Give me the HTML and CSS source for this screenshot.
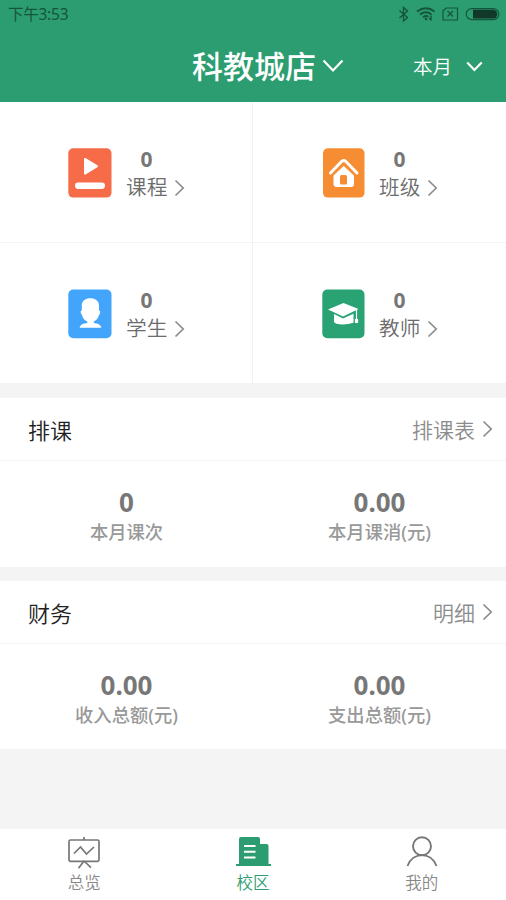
FILE: index.html
```html
<!DOCTYPE html>
<html lang="zh-CN">
<head>
<meta charset="utf-8">
<title>科教城店</title>
<link rel="stylesheet" href="styles.css">
</head>
<body>
<header class="header">
  <div class="status">
    <span class="time">下午3:53</span>
    <svg class="status-icons" width="104" height="22" viewBox="0 0 104 22" fill="none" stroke="#15553b" stroke-width="1.4">
      <path d="M1.500 10.500l8 7-4 3.500V7.500l4 3.500-8 7"/>
      <g stroke-width="1.900"><path d="M19 11.500q9-6.500 17.500 0M22 14.600q6-4.500 11.500 0M25 17.300q3-2.200 5.500-.5"/></g>
      <circle cx="28" cy="19" r="1.300" fill="#15553b" stroke="none"/>
      <path d="M33 15.500v5M31.300 18l1.700 2.300"/>
      <path d="M48 8h11.500v12H45V11zM49.500 11l5.500 5.500M55 11l-5.500 5.500" stroke-width="1.200"/>
      <rect x="68.200" y="8.600" width="32.600" height="11" rx="5.500" stroke-width="1.200"/>
      <path d="M75 9.800h20a4.300 4.300 0 0 1 0 8.600H75z" fill="#12382a" stroke="none"/>
    </svg>
  </div>
  <div class="title-row">
    <h1 class="title">科教城店</h1>
    <svg class="title-arrow" width="22" height="14" viewBox="0 0 22 14"><path d="M1.500 1.500l9.500 10 9.500-10"/></svg>
    <span class="period">本月</span>
    <svg class="period-arrow" width="17" height="11" viewBox="0 0 17 11"><path d="M1.200 1.500l7.200 7.500 7.300-7.500"/></svg>
  </div>
</header>

<main>
  <section class="grid">
    <a class="cell">
      <svg class="tile" width="44" height="50" viewBox="0 0 44 50"><rect x=".3" y=".3" width="43.200" height="49.300" rx="5" fill="#f66b48"/><path d="M17.500 10L29 17q2 1.200 0 2.600L17.500 26.500q-1.500.5-1.500-1V11q0-1.500 1.500-1z" fill="#fff"/><rect x="7" y="34.600" width="30" height="6.300" rx="3.100" fill="#fff"/></svg>
      <span class="info"><b class="count">0</b><span class="name">课程<svg class="next" width="11" height="18" viewBox="0 0 11 18"><path d="M1.500 1.500L9.200 9l-7.700 7.500"/></svg></span></span>
    </a>
    <a class="cell">
      <svg class="tile" width="44" height="50" viewBox="0 0 44 50"><rect x="2" y=".3" width="41.500" height="49.300" rx="5" fill="#f68d33"/><path d="M9.500 25L20.700 13.300q2-1.700 4 0L36 25" fill="none" stroke="#fff" stroke-width="3" stroke-linecap="round"/><path d="M22.700 18L33 27.500V36q0 3-3 3H15.500q-3 0-3-3v-8.500z" fill="#fff"/><rect x="19" y="27" width="7" height="9.500" rx="1.500" fill="#f68d33"/></svg>
      <span class="info"><b class="count">0</b><span class="name">班级<svg class="next" width="11" height="18" viewBox="0 0 11 18"><path d="M1.500 1.500L9.200 9l-7.700 7.500"/></svg></span></span>
    </a>
    <a class="cell">
      <svg class="tile" width="44" height="50" viewBox="0 0 44 50"><rect x=".3" y=".5" width="43.200" height="48.800" rx="5" fill="#42a5fb"/><path d="M13.800 17c-1-10.500 18-10.500 17.200 0v4.500c1.800 0 1.500 3 0 4.500-.8 3.500-3 5.500-5.200 6.500V34c4 .5 7 1.500 7.500 4.700H11.700c.5-3.200 3.800-4.200 7.600-4.700v-1.500c-2.500-1-4.500-3-5.300-6.500-1.500-1.500-2-4.500-.2-4.500z" fill="#fff"/></svg>
      <span class="info"><b class="count">0</b><span class="name">学生<svg class="next" width="11" height="18" viewBox="0 0 11 18"><path d="M1.500 1.500L9.200 9l-7.700 7.500"/></svg></span></span>
    </a>
    <a class="cell">
      <svg class="tile" width="44" height="50" viewBox="0 0 44 50"><rect x="1.300" y=".5" width="42.200" height="48.800" rx="5" fill="#29a373"/><path d="M7 20.500l15.500-6.600L37.500 20 22 27.500zM13 25l9 4.500 10.500-4.800v9q-9.500 3-17 1-2.500-.8-2.500-2z" fill="#fff"/><path d="M35.500 20.500V32M34.500 30.500h2v3h-2z" fill="#fff" stroke="#fff" stroke-width="1.200"/></svg>
      <span class="info"><b class="count">0</b><span class="name">教师<svg class="next" width="11" height="18" viewBox="0 0 11 18"><path d="M1.500 1.500L9.200 9l-7.700 7.500"/></svg></span></span>
    </a>
  </section>

  <section class="panel">
    <div class="panel-head"><h2>排课</h2><a class="more">排课表<svg class="next" width="11" height="18" viewBox="0 0 11 18"><path d="M1.500 1.500L9.200 9l-7.700 7.500"/></svg></a></div>
    <div class="stats">
      <div class="stat"><b>0</b><span>本月课次</span></div>
      <div class="stat"><b>0.00</b><span>本月课消(元)</span></div>
    </div>
  </section>

  <section class="panel">
    <div class="panel-head"><h2>财务</h2><a class="more">明细<svg class="next" width="11" height="18" viewBox="0 0 11 18"><path d="M1.500 1.500L9.200 9l-7.700 7.500"/></svg></a></div>
    <div class="stats">
      <div class="stat"><b>0.00</b><span>收入总额(元)</span></div>
      <div class="stat"><b>0.00</b><span>支出总额(元)</span></div>
    </div>
  </section>
</main>

<nav class="tabs">
  <a class="tab"><svg width="34" height="34" viewBox="0 0 34 34" fill="none" stroke="#777" stroke-width="1.700"><rect x="2" y="4" width="30" height="21.300" rx="1.500"/><path d="M17 1v3M17 25l-5.500 7.300M17 25l7 6.700M7 17.500l6.500-6.500 6 7L27 11"/></svg>总览</a>
  <a class="tab active"><svg width="36" height="34" viewBox="0 0 36 34"><path d="M4 28V3q0-2 2-2h17q2 0 2 2v5h6.500q2 0 2 2v18H36v2H1v-2z" fill="#2c9d71"/><path d="M9 10h11.500M9 15.800h11.500M9 21.500h11.500" stroke="#fff" stroke-width="2"/></svg>校区</a>
  <a class="tab"><svg width="34" height="34" viewBox="0 0 34 34" fill="none" stroke="#777" stroke-width="1.900"><circle cx="17" cy="10.200" r="9"/><path d="M2.500 30C8 15.500 26 15.500 31.500 30"/></svg>我的</a>
</nav>
</body>
</html>
```
FILE: styles.css
```css
* { box-sizing: border-box; }
body {
  margin: 0;
  height: 900px;
  display: flex;
  flex-direction: column;
  background: #f4f4f4;
  font-family: "Noto Sans", "Noto Sans CJK SC", sans-serif;
  color: #777;
}
svg { display: block; flex: none; }
h1, h2 { margin: 0; }

.header { height: 102px; background: #2c9d71; }
.status {
  height: 30px;
  display: flex;
  justify-content: space-between;
  padding: 0 4px 0 8px;
}
.time { font-size: 15.500px; line-height: 29px; letter-spacing: -.25px; color: #15553b; }
.title-row {
  height: 72px;
  display: flex;
  align-items: center;
  padding-left: 192px;
  color: #fff;
}
.title { font-size: 31px; line-height: 72px; font-weight: 500; }
.title-row path { fill: none; stroke: #fff; stroke-width: 2.200; }
.title-arrow { margin-left: 6px; }
.period { margin-left: 69px; font-size: 19.500px; line-height: 73px; font-weight: 350; }
.period-arrow { margin-left: 14px; }

.grid {
  display: grid;
  grid-template-columns: 253px 253px;
  grid-template-rows: 141px 141px;
  background: #fff;
}
.cell {
  display: flex;
  align-items: flex-start;
  padding: 46px 0 0 68px;
  border-bottom: 1px solid #f4f4f4;
}
.cell:nth-child(odd) { border-right: 1px solid #f1f1f1; }
.info { margin-left: 14px; display: flex; flex-direction: column; }
.count { width: 41px; text-align: center; font-size: 21px; line-height: 23px; }
.name {
  display: flex;
  align-items: center;
  font-size: 20.700px;
  line-height: 33px;
  font-weight: 350;
  color: #6c6c6c;
}
.next { margin-left: 7px; fill: none; stroke: #8c8c8c; stroke-width: 1.700; }

.panel { height: 168.500px; margin-top: 14px; background: #fff; }
.panel-head {
  height: 63px;
  display: flex;
  align-items: center;
  justify-content: space-between;
  padding: 0 13px 0 28px;
  border-bottom: 1px solid #f4f4f4;
}
.panel-head h2 { font-size: 22px; font-weight: 350; color: #222; }
.more { display: flex; align-items: center; font-size: 21px; color: #8c8c8c; font-weight: 350; }
.stats { display: grid; grid-template-columns: 1fr 1fr; padding-top: 25px; }
.stat { display: flex; flex-direction: column; align-items: center; }
.stat b { font-size: 26px; line-height: 32px; }
.stat span { font-size: 18.300px; line-height: 28px; font-weight: 500; color: #999; }

.tabs {
  margin-top: auto;
  height: 71px;
  display: grid;
  grid-template-columns: repeat(3, 1fr);
  background: #fff;
}
.tab {
  display: flex;
  flex-direction: column;
  align-items: center;
  padding-top: 7px;
  font-size: 16.500px;
  line-height: 25px;
  font-weight: 350;
  color: #888;
}
.active { color: #2c9d71; }
```
